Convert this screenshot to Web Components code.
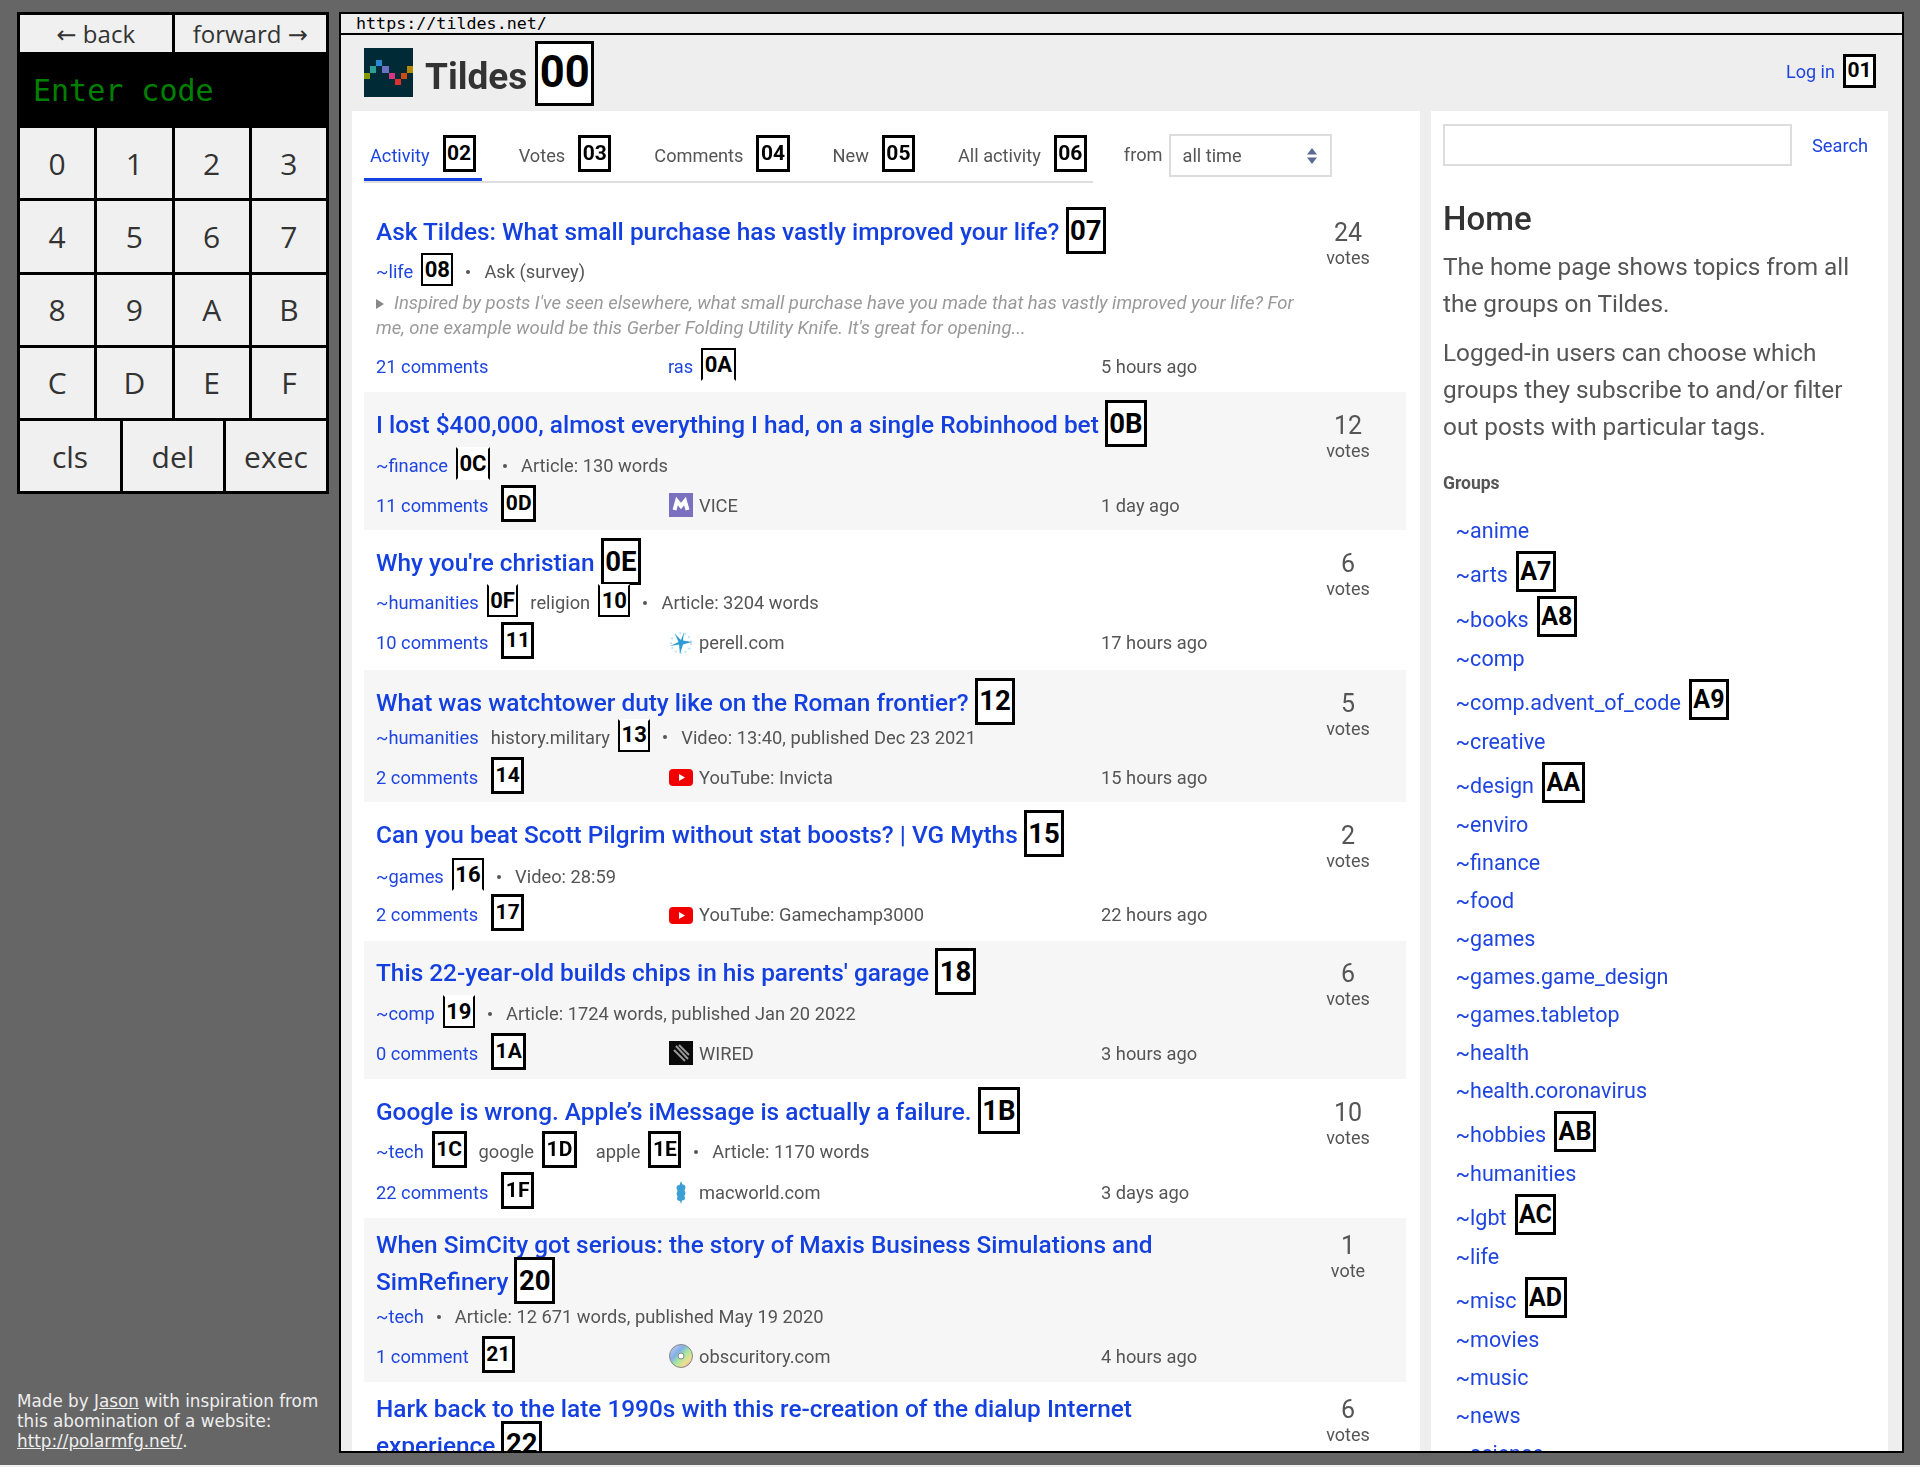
<!DOCTYPE html>
<html lang="en">
<head>
<meta charset="utf-8">
<title>Tildes code browser</title>
<style>
  html { background: #f0f0f0; }
  body { margin: 0; }
</style>
</head>
<body>
<app-shell>
  <code-pad slot="left"></code-pad>
  <site-credit slot="left">Made by <u>Jason</u> with inspiration from this abomination of a website: <u>http://polarmfg.net/</u>.</site-credit>
  <browser-frame url="https://tildes.net/">
    <tildes-page>
      <site-header slot="header"></site-header>
      <topic-tabs slot="main"></topic-tabs>

      <topic-row slot="main" votes="24" style="--row-h:209px;--pad-top:30px;--meta-gap:6.5px;--sum-gap:4.5px;--foot-gap:10.5px">
        <span slot="title">Ask Tildes: What small purchase has vastly improved your life? <hint-badge size="lg">07</hint-badge></span>
        <t-link slot="meta">~life</t-link><hint-badge slot="meta" size="sm">08</hint-badge><meta-text slot="meta" dot>Ask (survey)</meta-text>
        <span slot="summary">Inspired by posts I've seen elsewhere, what small purchase have you made that has vastly improved your life? For<br>me, one example would be this Gerber Folding Utility Knife. It's great for opening...</span>
        <t-link slot="comments">21 comments</t-link>
        <t-link slot="source" style="margin-left:-1px">ras</t-link><hint-badge slot="source" size="sm" edge="nb">0A</hint-badge>
        <span slot="time">5 hours ago</span>
      </topic-row>

      <topic-row slot="main" votes="12" alt style="--row-h:138px">
        <span slot="title">I lost $400,000, almost everything I had, on a single Robinhood bet <hint-badge size="lg">0B</hint-badge></span>
        <t-link slot="meta">~finance</t-link><hint-badge slot="meta" size="sm" edge="nt nb">0C</hint-badge><meta-text slot="meta" dot>Article: 130 words</meta-text>
        <t-link slot="comments">11 comments</t-link><hint-badge slot="comments" size="ct">0D</hint-badge>
        <src-icon slot="source" kind="vice"></src-icon><span slot="source">VICE</span>
        <span slot="time">1 day ago</span>
      </topic-row>

      <topic-row slot="main" votes="6" style="--row-h:139.500px;--meta-gap:6.500px;--foot-gap:10px">
        <span slot="title">Why you're christian <hint-badge size="lg">0E</hint-badge></span>
        <t-link slot="meta">~humanities</t-link><hint-badge slot="meta" size="sm" edge="nt">0F</hint-badge><meta-text slot="meta" tag>religion</meta-text><hint-badge slot="meta" size="sm" edge="nt">10</hint-badge><meta-text slot="meta" dot>Article: 3204 words</meta-text>
        <t-link slot="comments">10 comments</t-link><hint-badge slot="comments" size="ct">11</hint-badge>
        <src-icon slot="source" kind="perell"></src-icon><span slot="source">perell.com</span>
        <span slot="time">17 hours ago</span>
      </topic-row>

      <topic-row slot="main" votes="5" alt style="--row-h:132.500px;--meta-gap:1.500px;--foot-gap:10px">
        <span slot="title">What was watchtower duty like on the Roman frontier? <hint-badge size="lg">12</hint-badge></span>
        <t-link slot="meta">~humanities</t-link><meta-text slot="meta" tag>history.military</meta-text><hint-badge slot="meta" size="sm" edge="nt">13</hint-badge><meta-text slot="meta" dot>Video: 13:40, published Dec 23 2021</meta-text>
        <t-link slot="comments">2 comments</t-link><hint-badge slot="comments" size="ct">14</hint-badge>
        <src-icon slot="source" kind="youtube"></src-icon><span slot="source">YouTube: Invicta</span>
        <span slot="time">15 hours ago</span>
      </topic-row>

      <topic-row slot="main" votes="2" style="--row-h:139px;--meta-gap:8.500px;--foot-gap:8px">
        <span slot="title">Can you beat Scott Pilgrim without stat boosts? | VG Myths <hint-badge size="lg">15</hint-badge></span>
        <t-link slot="meta">~games</t-link><hint-badge slot="meta" size="sm" edge="nb">16</hint-badge><meta-text slot="meta" dot>Video: 28:59</meta-text>
        <t-link slot="comments">2 comments</t-link><hint-badge slot="comments" size="ct">17</hint-badge>
        <src-icon slot="source" kind="youtube"></src-icon><span slot="source">YouTube: Gamechamp3000</span>
        <span slot="time">22 hours ago</span>
      </topic-row>

      <topic-row slot="main" votes="6" alt style="--row-h:138px;--pad-top:13px">
        <span slot="title">This 22-year-old builds chips in his parents' garage <hint-badge size="lg">18</hint-badge></span>
        <t-link slot="meta">~comp</t-link><hint-badge slot="meta" size="sm" edge="nt">19</hint-badge><meta-text slot="meta" dot>Article: 1724 words, published Jan 20 2022</meta-text>
        <t-link slot="comments">0 comments</t-link><hint-badge slot="comments" size="ct">1A</hint-badge>
        <src-icon slot="source" kind="wired"></src-icon><span slot="source">WIRED</span>
        <span slot="time">3 hours ago</span>
      </topic-row>

      <topic-row slot="main" votes="10" style="--row-h:139px;--meta-gap:6.500px;--foot-gap:10.500px">
        <span slot="title">Google is wrong. Apple’s iMessage is actually a failure. <hint-badge size="lg">1B</hint-badge></span>
        <t-link slot="meta">~tech</t-link><hint-badge slot="meta" size="md">1C</hint-badge><meta-text slot="meta" tag>google</meta-text><hint-badge slot="meta" size="md">1D</hint-badge><meta-text slot="meta" tag style="margin-left:19px">apple</meta-text><hint-badge slot="meta" size="md">1E</hint-badge><meta-text slot="meta" dot>Article: 1170 words</meta-text>
        <t-link slot="comments">22 comments</t-link><hint-badge slot="comments" size="ct">1F</hint-badge>
        <src-icon slot="source" kind="macworld"></src-icon><span slot="source">macworld.com</span>
        <span slot="time">3 days ago</span>
      </topic-row>

      <topic-row slot="main" votes="1" unit="vote" alt style="--row-h:163.700px;--pad-top:8px;--meta-gap:1.500px">
        <span slot="title">When SimCity got serious: the story of Maxis Business Simulations and SimRefinery <hint-badge size="lg">20</hint-badge></span>
        <t-link slot="meta">~tech</t-link><meta-text slot="meta" dot>Article: 12 671 words, published May 19 2020</meta-text>
        <t-link slot="comments">1 comment</t-link><hint-badge slot="comments" size="ct">21</hint-badge>
        <src-icon slot="source" kind="cd"></src-icon><span slot="source">obscuritory.com</span>
        <span slot="time">4 hours ago</span>
      </topic-row>

      <topic-row slot="main" votes="6" style="--pad-top:8px">
        <span slot="title">Hark back to the late 1990s with this re-creation of the dialup Internet experience <hint-badge size="lg">22</hint-badge></span>
      </topic-row>

      <search-box slot="side"></search-box>
      <side-intro slot="side"></side-intro>
      <group-item slot="side">~anime</group-item>
      <group-item slot="side" hint="A7">~arts</group-item>
      <group-item slot="side" hint="A8">~books</group-item>
      <group-item slot="side">~comp</group-item>
      <group-item slot="side" hint="A9">~comp.advent_of_code</group-item>
      <group-item slot="side">~creative</group-item>
      <group-item slot="side" hint="AA">~design</group-item>
      <group-item slot="side">~enviro</group-item>
      <group-item slot="side">~finance</group-item>
      <group-item slot="side">~food</group-item>
      <group-item slot="side">~games</group-item>
      <group-item slot="side">~games.game_design</group-item>
      <group-item slot="side">~games.tabletop</group-item>
      <group-item slot="side">~health</group-item>
      <group-item slot="side">~health.coronavirus</group-item>
      <group-item slot="side" hint="AB">~hobbies</group-item>
      <group-item slot="side">~humanities</group-item>
      <group-item slot="side" hint="AC">~lgbt</group-item>
      <group-item slot="side">~life</group-item>
      <group-item slot="side" hint="AD">~misc</group-item>
      <group-item slot="side">~movies</group-item>
      <group-item slot="side">~music</group-item>
      <group-item slot="side">~news</group-item>
      <group-item slot="side">~science</group-item>
    </tildes-page>
  </browser-frame>
</app-shell>

<script>
const ROBOTO = `Roboto, "Liberation Sans", sans-serif`;

function shadow(el, html) {
    el.attachShadow({ mode: 'open' }).innerHTML = html;
}

class AppShell extends HTMLElement {
    connectedCallback() {
        shadow(this, `
            <style>
                :host { display: flex; height: 1465px; background: #666; overflow: hidden; }
                .left { width: 312px; margin-left: 17px; margin-right: 10px; padding: 12px 0 14px; box-sizing: border-box;
                        display: flex; flex-direction: column; justify-content: space-between; flex: none; }
            </style>
            <div class="left"><slot name="left"></slot></div>
            <slot></slot>`);
    }
}

class CodePad extends HTMLElement {
    connectedCallback() {
        const keys = '0123456789ABCDEF'.split('').map(k => `<button>${k}</button>`).join('');
        shadow(this, `
            <style>
                :host { display: block; border: 3px solid #000; background: #000; }
                button { border: 0; padding: 0; margin: 0; background: #f0f0f0; color: #333;
                         font: 30px "Open Sans", "Noto Sans", sans-serif; }
                .nav { display: grid; grid-template-columns: 1fr 1fr; gap: 3px; height: 37px; }
                .nav button { font-size: 24px; }
                .nav span { font-family: "DejaVu Sans", sans-serif; }
                .screen { height: 76px; box-sizing: border-box; padding: 0 13px; display: flex; align-items: center;
                          color: #008000; font: 30px "DejaVu Sans Mono", monospace; }
                .keys { display: grid; grid-template-columns: repeat(4, 1fr); grid-auto-rows: 70.25px; gap: 3px; }
                .cmd { display: grid; grid-template-columns: repeat(3, 1fr); height: 70px; gap: 3px; margin-top: 3px; }
            </style>
            <div class="nav"><button><span>←</span> back</button><button>forward <span>→</span></button></div>
            <div class="screen">Enter code</div>
            <div class="keys">${keys}</div>
            <div class="cmd"><button>cls</button><button>del</button><button>exec</button></div>`);
    }
}

class SiteCredit extends HTMLElement {
    connectedCallback() {
        shadow(this, `
            <style>
                :host { display: block; color: #eee; font: 16.800px/20px "DejaVu Sans", sans-serif; }
            </style>
            <slot></slot>`);
    }
}

class BrowserFrame extends HTMLElement {
    connectedCallback() {
        shadow(this, `
            <style>
                :host { display: flex; flex-direction: column; width: 1565px; height: 1441px; margin-top: 12px; flex: none;
                        box-sizing: border-box; border: 2px solid #000; background: #eee; overflow: hidden; }
                .url { height: 21px; box-sizing: border-box; flex: none; border-bottom: 2px solid #000; padding: 0 15px;
                       font: 16.700px/19px "DejaVu Sans Mono", monospace; color: #000; background: #eee; }
                .view { flex: 1; min-height: 0; overflow: hidden; }
            </style>
            <div class="url">${this.getAttribute('url')}</div>
            <div class="view"><slot></slot></div>`);
    }
}

class TildesPage extends HTMLElement {
    connectedCallback() {
        shadow(this, `
            <style>
                :host { display: block; height: 100%; background: #eee; filter: blur(.55px);
                        font: 18.300px ${ROBOTO}; color: #555; }
                .cols { display: flex; gap: 11px; padding: 0 14px 0 11px; align-items: flex-start; }
                main { width: 1068px; box-sizing: border-box; background: #fff; padding: 23px 14px 0 12px; flex: none; }
                aside { width: 457px; box-sizing: border-box; background: #fff; padding: 12.500px 14px 0 12px; flex: none; height: 1400px; }
            </style>
            <slot name="header"></slot>
            <div class="cols">
                <main><slot name="main"></slot></main>
                <aside><slot name="side"></slot></aside>
            </div>`);
    }
}

class SiteHeader extends HTMLElement {
    connectedCallback() {
        const squares = ['#859900', '#2aa198', '#268bd2', '#6c71c4', '#d33682', '#dc322f', '#cb4b16', '#b58900'];
        const rows = [4, 3, 2, 3, 4, 5, 4, 3];
        const rects = squares.map((c, i) => `<rect x="${i}" y="${rows[i]}" width="1" height="1" fill="${c}"/>`).join('');
        shadow(this, `
            <style>
                :host { display: flex; align-items: center; height: 76px; padding: 0 26px 0 23px; }
                svg { width: 49px; height: 49px; margin-top: -2px; flex: none; }
                .name { font: 700 37px ${ROBOTO}; color: #333; margin: 7px 8px 0 12px; }
                .login { margin-left: auto; margin-top: -3px; color: #1f45e0; display: flex; align-items: center; gap: 8px; font-size: 18px; }
            </style>
            <svg viewBox="0 0 8 8" shape-rendering="crispEdges"><rect width="8" height="8" fill="#002b36"/>${rects}</svg>
            <span class="name">Tildes</span>
            <hint-badge size="xl">00</hint-badge>
            <span class="login">Log in <hint-badge size="login">01</hint-badge></span>`);
    }
}

class TopicTabs extends HTMLElement {
    connectedCallback() {
        const tabs = [['Activity', '02', 1], ['Votes', '03'], ['Comments', '04'], ['New', '05'], ['All activity', '06']];
        shadow(this, `
            <style>
                :host { display: flex; align-items: flex-start; font-size: 18.200px; }
                nav { display: flex; height: 49px; box-sizing: border-box; border-bottom: 2px solid #ddd; gap: 31px; }
                .tab { display: flex; align-items: center; padding: 0 6px 2px; height: 47px; box-sizing: border-box; color: #555;
                       border-bottom: 3px solid transparent; }
                .on { color: #1f45e0; border-bottom-color: #1440e0; }
                .from { margin-left: 31px; line-height: 42px; color: #555; }
                .select { margin-left: 6px; width: 163px; height: 43px; box-sizing: border-box; border: 2px solid #ddd;
                          padding: 0 12px; line-height: 39px; color: #555; display: flex; justify-content: space-between; align-items: center; }
            </style>
            <nav>${tabs.map(t => `<div class="tab ${t[2] ? 'on' : ''}"><span>${t[0]}</span><hint-badge size="ct">${t[1]}</hint-badge></div>`).join('')}</nav>
            <span class="from">from</span>
            <div class="select">all time
                <svg width="12" height="18" viewBox="0 0 12 18"><path d="M6 1l5 6.500H1zM6 17l5-6.500H1z" fill="#5d6b94"/></svg>
            </div>`);
    }
}

class TopicRow extends HTMLElement {
    connectedCallback() {
        const hasSummary = this.querySelector('[slot=summary]');
        shadow(this, `
            <style>
                :host { display: flex; box-sizing: border-box; height: var(--row-h, auto); padding: var(--pad-top, 14px) 0 0 12px;
                        ${this.hasAttribute('alt') ? 'background: #f6f6f6;' : ''} }
                .body { width: 914px; flex: none; }
                .title { width: 880px; font: 500 24.400px/37px ${ROBOTO}; color: #1440e0; }
                .meta { display: flex; align-items: center; height: 30px; margin-top: var(--meta-gap, 7.5px); white-space: nowrap; }
                .summary { margin-top: var(--sum-gap, 0); font: italic 18.500px/25px ${ROBOTO}; color: #999; white-space: nowrap; }
                .summary svg { margin-right: 10px; }
                .foot { display: grid; grid-template-columns: 293px 432px auto; height: 30px; align-items: center;
                        margin-top: var(--foot-gap, 9.5px); white-space: nowrap; }
                .foot > div { display: flex; align-items: center; }
                .votes { width: 116px; flex: none; text-align: center; font-size: 18px; line-height: 21px; color: #555; }
                .votes b { display: block; margin-top: 6px; font: 400 25px/28px ${ROBOTO}; }
            </style>
            <div class="body">
                <div class="title"><slot name="title"></slot></div>
                ${this.children.length > 1 ? `
                <div class="meta"><slot name="meta"></slot></div>
                ${hasSummary ? `<div class="summary"><svg width="8" height="10" viewBox="0 0 8 10"><path d="M0 0l8 5-8 5z" fill="#888"/></svg><slot name="summary"></slot></div>` : ''}
                <div class="foot">
                    <div><slot name="comments"></slot></div>
                    <div><slot name="source"></slot></div>
                    <div><slot name="time"></slot></div>
                </div>` : ''}
            </div>
            <div class="votes"><b>${this.getAttribute('votes')}</b>${this.getAttribute('unit') || 'votes'}</div>`);
    }
}

class TLink extends HTMLElement {
    connectedCallback() {
        shadow(this, `
            <style>:host { color: #1f45e0; }</style>
            <slot></slot>`);
    }
}

class MetaText extends HTMLElement {
    connectedCallback() {
        const dot = this.hasAttribute('dot');
        shadow(this, `
            <style>
                :host { display: inline-flex; align-items: center; color: #555; margin-left: ${dot ? 13 : 12}px; }
                i { width: 4px; height: 4px; border-radius: 50%; background: #555; margin-right: 14px; }
            </style>
            ${dot ? '<i></i>' : ''}<slot></slot>`);
    }
}

class HintBadge extends HTMLElement {
    connectedCallback() {
        // height, font size, border, left margin, lift
        const sizes = {
            xl: [65, 43.5, 3, 0, 0],
            lg: [47, 27.5, 3, 0, 3],
            md: [37, 21, 3, 8, 2],
            ct: [37, 21, 3, 13, 2],
            sm: [33, 22, 2, 8, 2],
            login: [34, 21, 3, 0, 1],
            group: [41, 25, 3, 8, 2.5]
        };
        const s = sizes[this.getAttribute('size')] || sizes.md;
        const edge = this.getAttribute('edge') || '';
        shadow(this, `
            <style>
                :host { display: inline-flex; align-items: center; justify-content: center; vertical-align: middle;
                        box-sizing: border-box; height: ${s[0]}px; margin: -${s[0] / 2}px 0 -${s[0] / 2}px ${s[3]}px; padding: 0 1.500px;
                        border: ${s[2]}px solid #000; ${edge.includes('nt') ? 'border-top-color: transparent;' : ''}
                        ${edge.includes('nb') ? 'border-bottom-color: transparent;' : ''}
                        background: #fff; color: #000; flex: none;
                        font: 700 ${s[1]}px/1 ${ROBOTO}; position: relative; top: -${s[4]}px; }
            </style>
            <slot></slot>`);
    }
}

class SrcIcon extends HTMLElement {
    connectedCallback() {
        const icons = {
            vice: `<rect width="24" height="24" fill="#7a70bf"/><path d="M5.500 17l2.500-9 4 5 4-5 2.500 9" fill="none" stroke="#fff" stroke-width="4"/>`,
            perell: `<circle cx="12" cy="12" r="10" fill="none" stroke="#bfe3f5" stroke-width="2" stroke-dasharray="2 3"/><path d="M15 1l-1 8.500 9 1.500-9 2.500L11 23l-1-9.500L1 15l8.500-4L6 3l6 6z" fill="#2d9bd6"/>`,
            youtube: `<rect y="4" width="24" height="17" rx="4" fill="#f00000"/><path d="M10 9l6 3.500-6 3.500z" fill="#fff"/>`,
            wired: `<rect width="24" height="24" fill="#0a0a0a"/><path d="M7 5l12 13M5 9l11 11M10 4l10 10" stroke="#999" stroke-width="2" fill="none"/>`,
            macworld: `<path d="M12 1l1.500 3.500c2.500 0 3 1.500 3 3l-1 3 1 2.500-1 3 .5 2c0 1.500-1 2.500-3 2.500L12 24l-1-3c-2 0-3-1-3-2.500l.5-2-1-3 1-2.500-1-3c0-1.500.5-3 3-3z" fill="#3b9fd6"/>`,
            cd: `<defs><linearGradient id="g" x1="0" y1="0" x2="1" y2="1"><stop offset="0" stop-color="#e0d0f0"/><stop offset=".35" stop-color="#7fb0e8"/><stop offset=".55" stop-color="#a8e8a0"/><stop offset=".75" stop-color="#f0e090"/><stop offset="1" stop-color="#c880d0"/></linearGradient></defs><circle cx="12" cy="12" r="11.500" fill="url(#g)" stroke="#888"/><circle cx="12" cy="12" r="3" fill="#fff" stroke="#888"/>`
        };
        shadow(this, `
            <style>:host { display: inline-flex; width: 24px; height: 24px; margin-right: 6px; flex: none; }</style>
            <svg width="24" height="24" viewBox="0 0 24 24">${icons[this.getAttribute('kind')]}</svg>`);
    }
}

class SearchBox extends HTMLElement {
    connectedCallback() {
        shadow(this, `
            <style>
                :host { display: flex; align-items: center; gap: 20px; color: #1f45e0; }
                span { position: relative; top: 1px; }
                .field { width: 349px; height: 42px; box-sizing: border-box; border: 2px solid #ddd; background: #fff; }
            </style>
            <div class="field"></div><span>Search</span>`);
    }
}

class SideIntro extends HTMLElement {
    connectedCallback() {
        shadow(this, `
            <style>
                :host { display: block; margin-top: 33px; }
                h2 { margin: 0 0 10.600px; font: 500 33px/40px ${ROBOTO}; color: #333; }
                p { margin: 0 0 12.600px; font-size: 24.350px; line-height: 36.800px; color: #555; }
                h3 { margin: 25px 0 17px; font: 700 17.500px/24px ${ROBOTO}; color: #555; }
            </style>
            <h2>Home</h2>
            <p>The home page shows topics from all<br>the groups on Tildes.</p>
            <p>Logged-in users can choose which<br>groups they subscribe to and/or filter<br>out posts with particular tags.</p>
            <h3>Groups</h3>`);
    }
}

class GroupItem extends HTMLElement {
    connectedCallback() {
        const hint = this.getAttribute('hint');
        shadow(this, `
            <style>
                :host { display: flex; align-items: center; box-sizing: border-box; height: ${hint ? 45 : 38}px; padding: ${hint ? 4 : 0}px 0 0 12.500px;
                        font-size: 21.500px; color: #1f45e0; white-space: nowrap; }
            </style>
            <slot></slot>${hint ? `<hint-badge size="group">${hint}</hint-badge>` : ''}`);
    }
}

customElements.define('app-shell', AppShell);
customElements.define('code-pad', CodePad);
customElements.define('site-credit', SiteCredit);
customElements.define('browser-frame', BrowserFrame);
customElements.define('tildes-page', TildesPage);
customElements.define('site-header', SiteHeader);
customElements.define('topic-tabs', TopicTabs);
customElements.define('topic-row', TopicRow);
customElements.define('t-link', TLink);
customElements.define('meta-text', MetaText);
customElements.define('hint-badge', HintBadge);
customElements.define('src-icon', SrcIcon);
customElements.define('search-box', SearchBox);
customElements.define('side-intro', SideIntro);
customElements.define('group-item', GroupItem);
</script>
</body>
</html>
